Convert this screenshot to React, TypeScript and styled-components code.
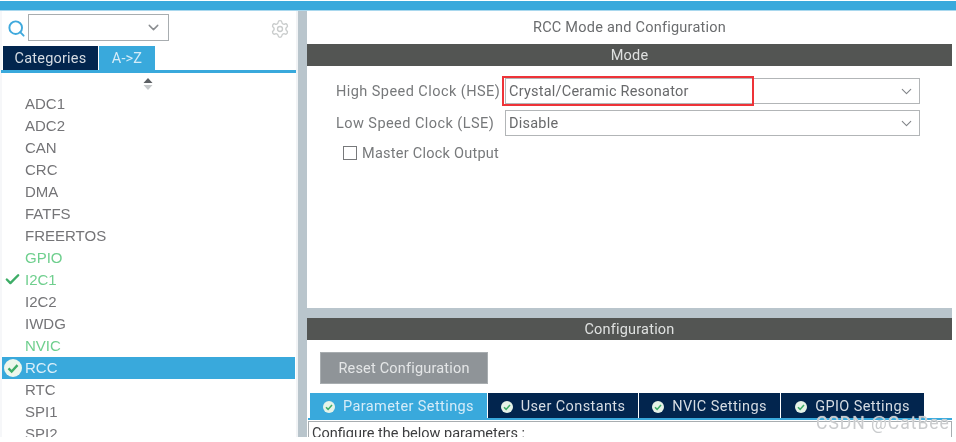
import * as React from "react";
import styled, { createGlobalStyle } from "styled-components";
import { Check, ChevronDown, Search, Settings } from "lucide-react";

const GlobalStyle = createGlobalStyle`
  html, body {
    margin: 0;
    padding: 0;
    background: #fff;
  }
  body {
    font-family: Roboto, "Liberation Sans", sans-serif;
  }
`;

const Page = styled.div`
  position: relative;
  width: 956px;
  height: 442px;
  overflow: hidden;
  background: #fff;
  filter: blur(0.5px);
`;

const TopBar = styled.div`
  height: 9px;
  margin-top: 1px;
  background: #39a9dc;
  border-bottom: 1px solid #a9d8ee;
`;

const Frame = styled.div`
  display: flex;
  height: 426px;
  width: 952px;
  overflow: hidden;
`;

const Sidebar = styled.div`
  width: 296px;
  flex: none;
  display: flex;
  flex-direction: column;
  border-right: 2px solid #f1f3f5;
  box-shadow: inset 2px 0 0 #f6f7f9;
  overflow: hidden;
`;

const SearchRow = styled.div`
  display: flex;
  align-items: center;
  flex: none;
  height: 35px;
  padding: 0 6px 0 7px;
  color: #3fa9dd;
`;

const Combo = styled.div`
  display: flex;
  align-items: center;
  justify-content: flex-end;
  width: 141px;
  height: 27px;
  margin-left: 2px;
  margin-top: -2px;
  padding-right: 6px;
  box-sizing: border-box;
  border: 1px solid #a8adb0;
  color: #8a8d90;
`;

const Gear = styled.div`
  display: flex;
  margin-left: auto;
  color: #c9cccc;
`;

const SideTabs = styled.div`
  display: flex;
  flex: none;
  gap: 1px;
  height: 24px;
  padding-left: 3px;
`;

const SideTab = styled.div<{ $active?: boolean; $width: number }>`
  display: flex;
  align-items: center;
  justify-content: center;
  width: ${(p) => p.$width}px;
  font-size: 14.5px;
  letter-spacing: 0.2px;
  color: ${(p) => (p.$active ? "#d5ecf8" : "#d6dce3")};
  background: ${(p) => (p.$active ? "#39a9dc" : "#02254e")};
`;

const BlueRule = styled.div`
  flex: none;
  height: 3px;
  margin-left: 1px;
  background: #39a9dc;
`;

const SortArrows = styled.div`
  display: flex;
  flex: none;
  justify-content: center;
  height: 20px;
  padding-top: 5px;
  box-sizing: border-box;
`;

const List = styled.div`
  display: flex;
  flex-direction: column;
  flex: none;
`;

const Row = styled.div<{ $selected?: boolean; $green?: boolean }>`
  position: relative;
  display: flex;
  align-items: center;
  flex: none;
  height: 22px;
  box-sizing: border-box;
  margin: 0 1px 0 2px;
  padding: 0 0 2px 23px;
  font-family: "Liberation Sans", Arial, sans-serif;
  font-size: 15px;
  color: ${(p) => (p.$selected ? "#dcEff9" : p.$green ? "#6fcf8e" : "#747477")};
  background: ${(p) => (p.$selected ? "#39a9dc" : "transparent")};
`;

const RowMark = styled.span`
  position: absolute;
  left: 2px;
  top: 2px;
  display: flex;
  color: #3ead67;
`;

const Splitter = styled.div`
  width: 9px;
  flex: none;
  background: #b9c5cc;
`;

const Main = styled.div`
  flex: 1;
  display: flex;
  flex-direction: column;
  min-width: 0;
`;

const Title = styled.div`
  display: flex;
  align-items: center;
  justify-content: center;
  flex: none;
  height: 33px;
  font-size: 14.5px;
  letter-spacing: 0.23px;
  color: #6a6c6e;
  background: #fff;
`;

const SectionHead = styled.div`
  display: flex;
  align-items: center;
  justify-content: center;
  height: 22px;
  flex: none;
  font-size: 14.5px;
  letter-spacing: 0.2px;
  color: #dfe1e0;
  background: #535553;
`;

const ModePanel = styled.div`
  position: relative;
  flex: none;
  height: 242px;
  padding: 12px 32px 0 29px;
  box-sizing: border-box;
`;

const FieldRow = styled.div`
  display: grid;
  grid-template-columns: 169px 1fr;
  align-items: center;
  height: 26px;
  margin-bottom: 6px;
`;

const FieldLabel = styled.span`
  font-size: 14.5px;
  letter-spacing: 0.44px;
  color: #77797b;
  white-space: nowrap;
`;

const Select = styled.div`
  display: flex;
  align-items: center;
  justify-content: space-between;
  height: 26px;
  padding: 0 4px 0 3px;
  box-sizing: border-box;
  border: 1px solid #b2b5b7;
  font-size: 14.5px;
  letter-spacing: 0.22px;
  color: #68696b;
`;

const SelectArrow = styled.span`
  display: flex;
  color: #808488;
`;

const CheckRow = styled.label`
  display: flex;
  align-items: center;
  gap: 5px;
  margin-left: 7px;
  height: 22px;
  margin-top: 2px;
  font-size: 14.5px;
  letter-spacing: 0.25px;
  color: #77797b;
`;

const CheckBox = styled.span`
  width: 12px;
  height: 12px;
  border: 1px solid #77797b;
  background: #fff;
`;

const RedBox = styled.div`
  position: absolute;
  left: 195px;
  top: 10px;
  width: 252px;
  height: 30px;
  box-sizing: border-box;
  border: 2px solid #ee3338;
`;

const HorizontalGutter = styled.div`
  height: 10px;
  flex: none;
  background: #b9c5cc;
`;

const ConfigPanel = styled.div`
  flex: 1;
  display: flex;
  flex-direction: column;
  min-height: 0;
  overflow: hidden;
`;

const ResetButton = styled.button`
  align-self: flex-start;
  width: 168px;
  height: 32px;
  margin: 12px 0 9px 13px;
  padding: 0;
  flex: none;
  border: 1px solid #a8adb0;
  font-family: inherit;
  font-size: 14.5px;
  letter-spacing: 0.19px;
  color: #e4e6e7;
  background: #8f9498;
`;

const ConfigTabs = styled.div`
  display: flex;
  gap: 1px;
  height: 25px;
  flex: none;
  padding-left: 3px;
`;

const ConfigTab = styled.div<{ $active?: boolean; $width: number }>`
  display: flex;
  align-items: center;
  justify-content: center;
  gap: 8px;
  width: ${(p) => p.$width}px;
  padding-top: 2px;
  box-sizing: border-box;
  font-size: 14.5px;
  letter-spacing: 0.4px;
  color: ${(p) => (p.$active ? "#d5ecf8" : "#d6dce3")};
  background: ${(p) => (p.$active ? "#39a9dc" : "#02254e")};
`;

const ConfigRule = styled.div`
  height: 2px;
  flex: none;
  margin-left: 1px;
  background: #39a9dc;
`;

const ParamBox = styled.div`
  margin: 1px 0 0 1px;
  padding: 3px 0 0 3px;
  flex: none;
  height: 40px;
  border: 1px solid #a8adb0;
  font-size: 14.5px;
  color: #3c3d3f;
`;

const Watermark = styled.div`
  position: absolute;
  left: 816px;
  top: 413px;
  font-size: 17.5px;
  letter-spacing: 1px;
  color: #c9cbcd;
  text-shadow: 0 0 1px #fff;
`;

const TickCircle = ({ size, fill, tick }: { size: number; fill: string; tick: string }) => (
  <svg width={size} height={size} viewBox="0 0 20 20">
    <circle cx="10" cy="10" r="10" fill={fill} />
    <path d="M5 10.5l3.5 3.5L15 6.8" fill="none" stroke={tick} strokeWidth="2.6" />
  </svg>
);

const peripherals = [
  { name: "ADC1" },
  { name: "ADC2" },
  { name: "CAN" },
  { name: "CRC" },
  { name: "DMA" },
  { name: "FATFS" },
  { name: "FREERTOS" },
  { name: "GPIO", green: true },
  { name: "I2C1", green: true, checked: true },
  { name: "I2C2" },
  { name: "IWDG" },
  { name: "NVIC", green: true },
  { name: "RCC", selected: true },
  { name: "RTC" },
  { name: "SPI1" },
  { name: "SPI2" },
];

const configTabs = [
  { label: "Parameter Settings", width: 177, active: true },
  { label: "User Constants", width: 150 },
  { label: "NVIC Settings", width: 141 },
  { label: "GPIO Settings", width: 143 },
];

export default function App() {
  return (
    <Page>
      <GlobalStyle />
      <TopBar />
      <Frame>
        <Sidebar>
          <SearchRow>
            <Search size={19} strokeWidth={2.4} />
            <Combo>
              <ChevronDown size={17} />
            </Combo>
            <Gear>
              <Settings size={20} strokeWidth={1.6} />
            </Gear>
          </SearchRow>
          <SideTabs>
            <SideTab $width={95}>Categories</SideTab>
            <SideTab $width={56} $active>
              A-&gt;Z
            </SideTab>
          </SideTabs>
          <BlueRule />
          <SortArrows>
            <svg width="12" height="12" viewBox="0 0 12 12">
              <path d="M6 0l4.5 5h-9z" fill="#5c6064" />
              <path d="M6 12l-4.5-5h9z" fill="#c6c9cb" />
            </svg>
          </SortArrows>
          <List>
            {peripherals.map((p) => (
              <Row key={p.name} $selected={p.selected} $green={p.green}>
                {p.checked && (
                  <RowMark>
                    <Check size={17} strokeWidth={3.4} />
                  </RowMark>
                )}
                {p.selected && (
                  <RowMark>
                    <TickCircle size={18} fill="#eef7ec" tick="#3ead67" />
                  </RowMark>
                )}
                {p.name}
              </Row>
            ))}
          </List>
        </Sidebar>
        <Splitter />
        <Main>
          <Title>RCC Mode and Configuration</Title>
          <SectionHead>Mode</SectionHead>
          <ModePanel>
            <FieldRow>
              <FieldLabel>High Speed Clock (HSE)</FieldLabel>
              <Select>
                Crystal/Ceramic Resonator
                <SelectArrow>
                  <ChevronDown size={17} strokeWidth={1.5} />
                </SelectArrow>
              </Select>
            </FieldRow>
            <FieldRow>
              <FieldLabel>Low Speed Clock (LSE)</FieldLabel>
              <Select>
                Disable
                <SelectArrow>
                  <ChevronDown size={17} strokeWidth={1.5} />
                </SelectArrow>
              </Select>
            </FieldRow>
            <CheckRow>
              <CheckBox />
              Master Clock Output
            </CheckRow>
            <RedBox />
          </ModePanel>
          <HorizontalGutter />
          <SectionHead>Configuration</SectionHead>
          <ConfigPanel>
            <ResetButton>Reset Configuration</ResetButton>
            <ConfigTabs>
              {configTabs.map((t) => (
                <ConfigTab key={t.label} $width={t.width} $active={t.active}>
                  <TickCircle size={12} fill="#e6f3e8" tick="#3ead67" />
                  {t.label}
                </ConfigTab>
              ))}
            </ConfigTabs>
            <ConfigRule />
            <ParamBox>Configure the below parameters :</ParamBox>
          </ConfigPanel>
        </Main>
      </Frame>
      <Watermark>CSDN @CatBee</Watermark>
    </Page>
  );
}
